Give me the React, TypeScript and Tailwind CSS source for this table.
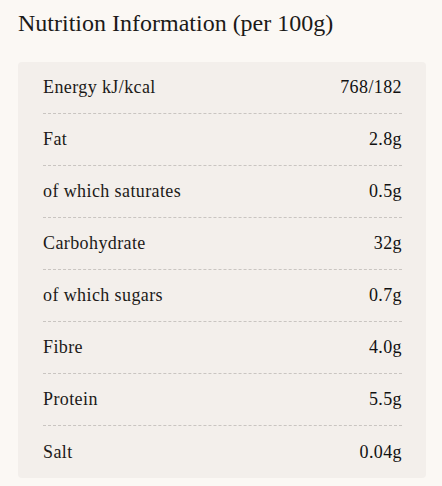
const rows: [string, string][] = [
  ["Energy kJ/kcal", "768/182"],
  ["Fat", "2.8g"],
  ["of which saturates", "0.5g"],
  ["Carbohydrate", "32g"],
  ["of which sugars", "0.7g"],
  ["Fibre", "4.0g"],
  ["Protein", "5.5g"],
  ["Salt", "0.04g"],
];

export default function App() {
  return (
    <div className="min-h-[486px] bg-[#fbf8f4] pl-[18px] pr-[16px] pt-[7px] font-['Liberation_Serif',serif] text-[#1c1a18]">
      <h2 className="text-[24px] leading-[32px]">Nutrition Information (per 100g)</h2>
      <div className="mt-[23px] rounded-[4px] bg-[#f3efeb] pl-[25px] pr-[24px]">
        {rows.map(([label, value], i) => (
          <div
            key={label}
            className={`flex h-[52px] items-center justify-between text-[18px] tracking-[0.4px] ${
              i < rows.length - 1 ? "border-b border-dashed border-[#c9c5c1]" : ""
            }`}
          >
            <span>{label}</span>
            <span className="text-[#111]">{value}</span>
          </div>
        ))}
      </div>
    </div>
  );
}
